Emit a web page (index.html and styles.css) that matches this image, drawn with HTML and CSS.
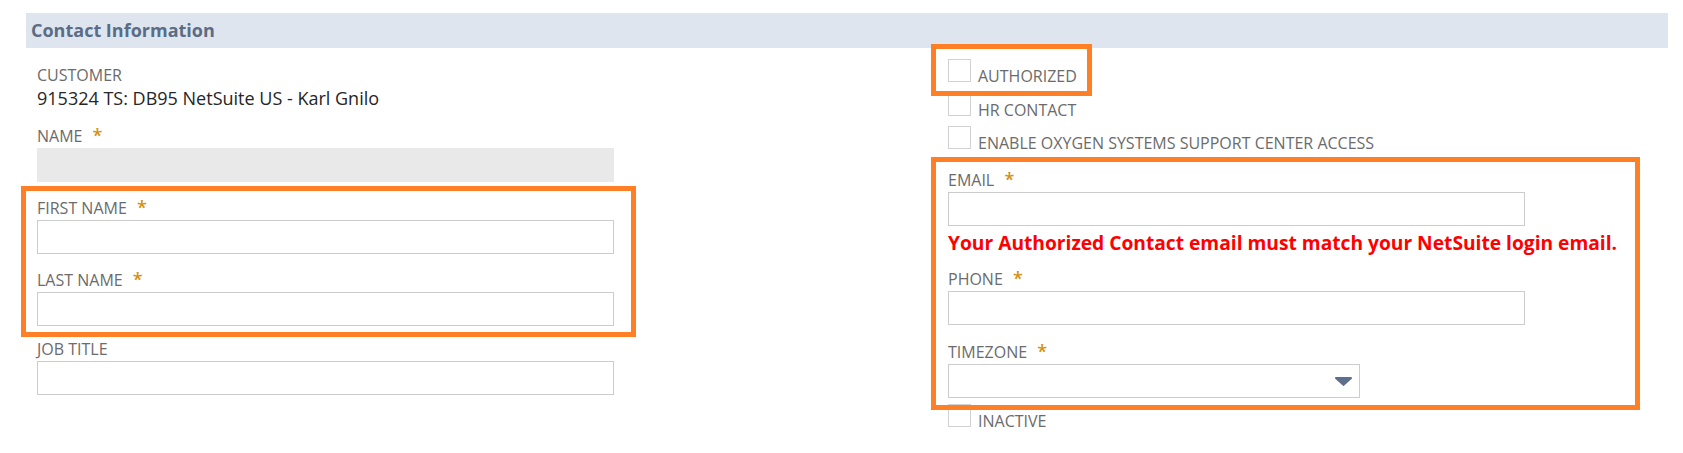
FILE: index.html
```html
<!DOCTYPE html>
<html lang="en">
<head>
  <meta charset="UTF-8">
  <meta name="viewport" content="width=device-width, initial-scale=1.0">
  <title>Contact Information</title>
  <link rel="stylesheet" href="styles.css">
</head>
<body>
  <div class="page">
    <div class="section-title">Contact Information</div>

    <div class="columns">
      <!-- Left column -->
      <div class="col col-left">
        <div class="static">
          <div class="static-label">CUSTOMER</div>
          <div class="static-value">915324 TS: DB95 NetSuite US - Karl Gnilo</div>
        </div>

        <div class="field field-name">
          <div class="label">NAME <span class="req">*</span></div>
          <input type="text" class="input input-disabled" disabled>
        </div>

        <div class="field">
          <div class="label">FIRST NAME <span class="req">*</span></div>
          <input type="text" class="input">
        </div>

        <div class="field">
          <div class="label">LAST NAME <span class="req">*</span></div>
          <input type="text" class="input">
        </div>

        <div class="field field-job">
          <div class="label">JOB TITLE</div>
          <input type="text" class="input">
        </div>
      </div>

      <!-- Right column -->
      <div class="col col-right">
        <div class="checks">
          <div class="check"><span class="checkbox"></span><span class="check-label">AUTHORIZED</span></div>
          <div class="check"><span class="checkbox"></span><span class="check-label">HR CONTACT</span></div>
          <div class="check"><span class="checkbox"></span><span class="check-label">ENABLE OXYGEN SYSTEMS SUPPORT CENTER ACCESS</span></div>
        </div>

        <div class="field field-email">
          <div class="label">EMAIL <span class="req">*</span></div>
          <input type="text" class="input">
        </div>

        <div class="error">Your Authorized Contact email must match your NetSuite login email.</div>

        <div class="field field-phone">
          <div class="label">PHONE <span class="req">*</span></div>
          <input type="text" class="input">
        </div>

        <div class="field field-timezone">
          <div class="label">TIMEZONE <span class="req">*</span></div>
          <div class="select">
            <svg class="select-arrow" width="17" height="9" viewBox="0 0 17 9">
              <path d="M1 0h15a1 1 0 0 1 .75 1.66L9.25 8.6a1 1 0 0 1-1.5 0L.25 1.66A1 1 0 0 1 1 0z"/>
            </svg>
          </div>
        </div>

        <div class="check check-inactive"><span class="checkbox"></span><span class="check-label">INACTIVE</span></div>
      </div>
    </div>

    <!-- annotation boxes drawn over the form -->
    <div class="mark mark-names"></div>
    <div class="mark mark-authorized"></div>
    <div class="mark mark-contact"></div>
  </div>
</body>
</html>
```

FILE: styles.css
```css
/* Variables and reset */
:root {
  --band-color: #dfe5ee;
  --title-color: #5b6c86;
  --label-color: #6b6b6b;
  --value-color: #262626;
  --border-color: #cccccc;
  --disabled-color: #e9e9e9;
  --required-color: #d4900c;
  --error-color: #ff0000;
  --mark-color: #ff7f27;
}

* {
  margin: 0;
  padding: 0;
  box-sizing: border-box;
}

body {
  font-family: "Open Sans", "Liberation Sans", sans-serif;
  background-color: #ffffff;
  color: var(--value-color);
}

/* Layout */
.page {
  position: relative;
  padding-top: 13px;
  min-height: 453px;
}

.section-title {
  margin: 0 15px 0 26px;
  height: 35px;
  line-height: 35px;
  padding-left: 5px;
  background-color: var(--band-color);
  color: var(--title-color);
  font-size: 18px;
  font-weight: 700;
}

.columns {
  display: grid;
  grid-template-columns: 911px 1fr;
  padding-left: 37px;
}

.col-left {
  padding-top: 17px;
}

.col-right {
  padding-top: 11px;
}

/* Static field */
.static-label {
  font-size: 16px;
  line-height: 20px;
  color: var(--label-color);
}

.static-value {
  margin-top: 3px;
  font-size: 18px;
  line-height: 20px;
  color: var(--value-color);
}

/* Fields */
.field + .field {
  margin-top: 16px;
}

.field-name {
  margin-top: 18px;
}

.col-left .field-job {
  margin-top: 13px;
}

.label {
  font-size: 16px;
  line-height: 20px;
  color: var(--label-color);
  margin-bottom: 2px;
}

.req {
  margin-left: 6px;
  font-size: 18px;
  font-weight: 600;
  line-height: 0;
  color: var(--required-color);
}

.input {
  display: block;
  width: 577px;
  height: 34px;
  padding: 0 6px;
  border: 1px solid var(--border-color);
  background-color: #ffffff;
  font: inherit;
  outline: none;
}

.input-disabled {
  background-color: var(--disabled-color);
  border-color: var(--disabled-color);
}

.select {
  width: 412px;
  height: 34px;
  border: 1px solid var(--border-color);
  display: flex;
  align-items: center;
  justify-content: flex-end;
  padding-right: 7px;
}

.select-arrow {
  fill: #5d6f8c;
}

/* Checkboxes */
.checks {
  display: flex;
  flex-direction: column;
  gap: 10.5px;
}

.check {
  display: flex;
  align-items: baseline;
  gap: 7px;
  height: 23px;
}

.checkbox {
  display: block;
  width: 23px;
  height: 23px;
  border: 1px solid #d2d2d2;
  background-color: #ffffff;
}

.check-label {
  font-size: 16px;
  line-height: 20px;
  color: var(--label-color);
}

/* Right column spacing */
.field-email {
  margin-top: 21px;
}

.error {
  margin-top: 5px;
  font-size: 19.2px;
  line-height: 24px;
  font-weight: 700;
  color: var(--error-color);
}

.field.field-phone {
  margin-top: 14px;
}

.field.field-timezone {
  margin-top: 17px;
}

.check-inactive {
  margin-top: 6px;
}

/* Annotation marks */
.mark {
  position: absolute;
  border: 5px solid var(--mark-color);
  pointer-events: none;
}

.mark-names {
  left: 21px;
  top: 186px;
  width: 615px;
  height: 151px;
}

.mark-authorized {
  left: 931px;
  top: 44px;
  width: 161px;
  height: 52px;
}

.mark-contact {
  left: 931px;
  top: 157px;
  width: 709px;
  height: 253px;
}
```
